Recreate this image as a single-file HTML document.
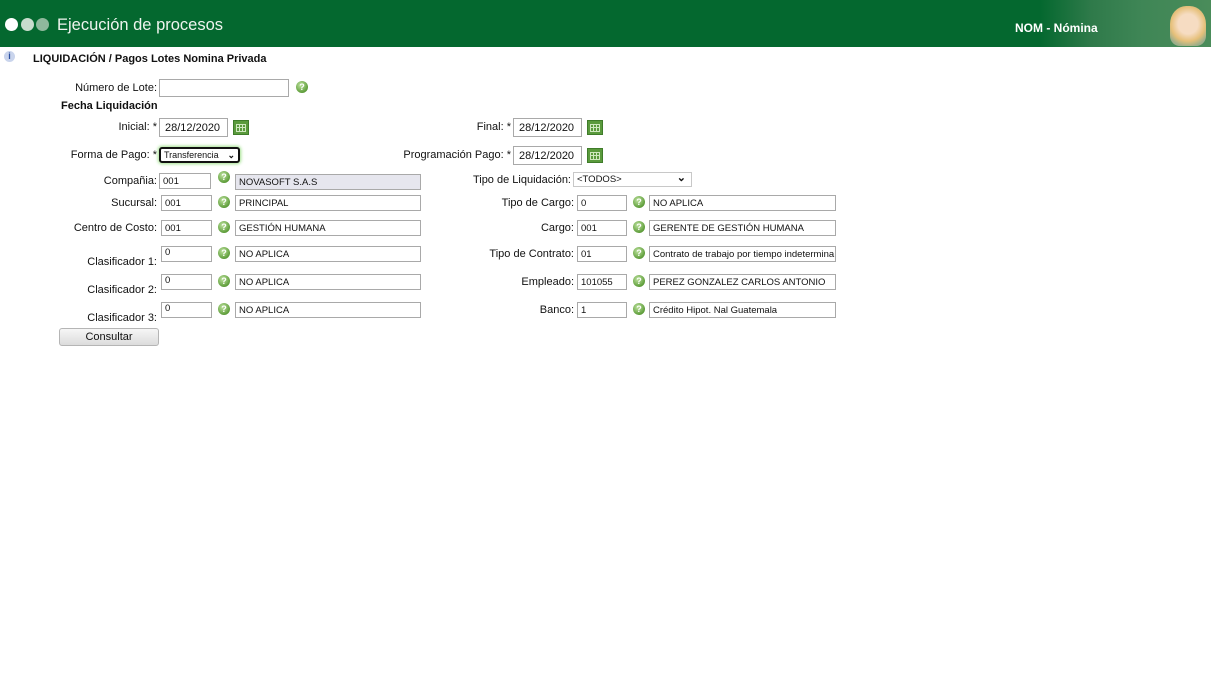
<!DOCTYPE html>
<html><head><meta charset="utf-8"><style>
*{margin:0;padding:0;box-sizing:border-box}
body{width:1211px;height:691px;background:#fff;position:relative;overflow:hidden;font-family:"Liberation Sans",Arial,sans-serif;font-size:11px;color:#111}
.a{position:absolute}
.hd{left:0;top:0;width:1211px;height:47px;background:#04682f}
.c{position:absolute;border-radius:50%;width:13px;height:13px;top:18px}
.l{position:absolute;text-align:right;white-space:nowrap;line-height:14px}
.i{position:absolute;border:1px solid #a9a9a9;background:#fff;height:16px;font-size:9.5px;line-height:15px;padding-left:3px;white-space:nowrap;overflow:hidden;color:#111}
.h{position:absolute;width:12px;height:12px;border-radius:50%;background:radial-gradient(circle at 40% 35%,#bfe3a0,#5e9d3a 70%,#3d7a25);color:#fff;font-size:9px;font-weight:bold;line-height:12px;text-align:center}
.cal{position:absolute;width:16px;height:15px;background:#5a9a3c;border:1px solid #3f7c2a}
.cal:after{content:"";position:absolute;left:2px;top:3px;width:10px;height:8px;background-color:#5a9a3c;box-shadow:inset 0 0 0 1px #cfe8bf;background-image:linear-gradient(90deg,transparent 3px,#cfe8bf 3px,#cfe8bf 4px,transparent 4px,transparent 6px,#cfe8bf 6px,#cfe8bf 7px,transparent 7px),linear-gradient(transparent 3px,#cfe8bf 3px,#cfe8bf 4px,transparent 4px)}
</style></head><body>
<div class="a hd"></div>
<div class="a" style="left:1040px;top:0;width:171px;height:47px;background:linear-gradient(90deg,#04682f,#2f7a4a 30%,#3f8656 60%,#4a8c5a)"></div>
<div class="a" style="left:1170px;top:6px;width:36px;height:40px;border-radius:45% 45% 10px 10px;background:radial-gradient(circle at 50% 45%,#f6dcc2 35%,#e6c07a 60%,#9cae8a 80%)"></div>
<div class="c" style="left:5px;background:#fff"></div>
<div class="c" style="left:21px;background:#c8dccd"></div>
<div class="c" style="left:36px;background:#8fb89c"></div>
<div class="a" style="left:57px;top:15px;font-size:16.5px;color:#eef4ee;line-height:20px">Ejecución de procesos</div>
<div class="a" style="left:1015px;top:21px;font-size:12px;font-weight:bold;color:#fff;line-height:14px">NOM - Nómina</div>
<div class="a" style="left:4px;top:51px;width:11px;height:11px;border-radius:50%;background:#c9d4ec;color:#2a4fa0;font-size:9px;font-weight:bold;text-align:center;line-height:11px">i</div>
<div class="a" style="left:33px;top:52px;font-weight:bold;line-height:14px">LIQUIDACIÓN / Pagos Lotes Nomina Privada</div>

<div class="l" style="right:1054px;top:81px">Número de Lote:</div>
<div class="i" style="left:159px;top:79px;width:130px;height:18px"></div>
<div class="h" style="left:296px;top:81px">?</div>
<div class="a" style="left:61px;top:99px;font-weight:bold;line-height:14px">Fecha Liquidación</div>

<div class="l" style="right:1054px;top:120px">Inicial: *</div>
<div class="i" style="left:159px;top:118px;width:69px;height:19px;font-size:11px;line-height:18px;padding-left:5px">28/12/2020</div>
<div class="cal" style="left:233px;top:120px"></div>
<div class="l" style="right:700px;top:120px">Final: *</div>
<div class="i" style="left:513px;top:118px;width:69px;height:19px;font-size:11px;line-height:18px;padding-left:5px">28/12/2020</div>
<div class="cal" style="left:587px;top:120px"></div>

<div class="l" style="right:1054px;top:148px">Forma de Pago: *</div>
<div class="i" style="left:159px;top:147px;width:81px;height:16px;border:2px solid #111;border-radius:3px;box-shadow:0 0 3px 1px #9fe08a;font-size:9px;line-height:12px;padding-left:3px">Transferencia <span style="position:absolute;right:3px;top:0;font-weight:bold">&#8964;</span></div>
<div class="l" style="right:700px;top:148px">Programación Pago: *</div>
<div class="i" style="left:513px;top:146px;width:69px;height:19px;font-size:11px;line-height:18px;padding-left:5px">28/12/2020</div>
<div class="cal" style="left:587px;top:148px"></div>

<div class="l" style="right:1054px;top:174px">Compañia:</div>
<div class="i" style="left:159px;top:173px;width:52px">001</div>
<div class="h" style="left:218px;top:171px">?</div>
<div class="i" style="left:235px;top:174px;width:186px;background:#e6e6ee">NOVASOFT S.A.S</div>
<div class="l" style="right:640px;top:173px">Tipo de Liquidación:</div>
<div class="i" style="left:573px;top:172px;width:119px;height:15px;line-height:13px;border-color:#c8c8c8">&lt;TODOS&gt;<span style="position:absolute;right:5px;top:-1px;font-weight:bold;font-size:11px">&#8964;</span></div>

<div class="l" style="right:1054px;top:196px">Sucursal:</div>
<div class="i" style="left:161px;top:195px;width:51px">001</div>
<div class="h" style="left:218px;top:196px">?</div>
<div class="i" style="left:235px;top:195px;width:186px">PRINCIPAL</div>
<div class="l" style="right:637px;top:196px">Tipo de Cargo:</div>
<div class="i" style="left:577px;top:195px;width:50px">0</div>
<div class="h" style="left:633px;top:196px">?</div>
<div class="i" style="left:649px;top:195px;width:187px">NO APLICA</div>

<div class="l" style="right:1054px;top:221px">Centro de Costo:</div>
<div class="i" style="left:161px;top:220px;width:51px">001</div>
<div class="h" style="left:218px;top:221px">?</div>
<div class="i" style="left:235px;top:220px;width:186px">GESTIÓN HUMANA</div>
<div class="l" style="right:637px;top:221px">Cargo:</div>
<div class="i" style="left:577px;top:220px;width:50px">001</div>
<div class="h" style="left:633px;top:221px">?</div>
<div class="i" style="left:649px;top:220px;width:187px">GERENTE DE GESTIÓN HUMANA</div>

<div class="l" style="right:1054px;top:255px">Clasificador 1:</div>
<div class="i" style="left:161px;top:246px;width:51px;line-height:12px">0</div>
<div class="h" style="left:218px;top:247px">?</div>
<div class="i" style="left:235px;top:246px;width:186px">NO APLICA</div>
<div class="l" style="right:637px;top:247px">Tipo de Contrato:</div>
<div class="i" style="left:577px;top:246px;width:50px">01</div>
<div class="h" style="left:633px;top:247px">?</div>
<div class="i" style="left:649px;top:246px;width:187px">Contrato de trabajo por tiempo indetermina</div>

<div class="l" style="right:1054px;top:283px">Clasificador 2:</div>
<div class="i" style="left:161px;top:274px;width:51px;line-height:12px">0</div>
<div class="h" style="left:218px;top:275px">?</div>
<div class="i" style="left:235px;top:274px;width:186px">NO APLICA</div>
<div class="l" style="right:637px;top:275px">Empleado:</div>
<div class="i" style="left:577px;top:274px;width:50px">101055</div>
<div class="h" style="left:633px;top:275px">?</div>
<div class="i" style="left:649px;top:274px;width:187px">PEREZ GONZALEZ CARLOS ANTONIO</div>

<div class="l" style="right:1054px;top:311px">Clasificador 3:</div>
<div class="i" style="left:161px;top:302px;width:51px;line-height:12px">0</div>
<div class="h" style="left:218px;top:303px">?</div>
<div class="i" style="left:235px;top:302px;width:186px">NO APLICA</div>
<div class="l" style="right:637px;top:303px">Banco:</div>
<div class="i" style="left:577px;top:302px;width:50px">1</div>
<div class="h" style="left:633px;top:303px">?</div>
<div class="i" style="left:649px;top:302px;width:187px">Crédito Hipot. Nal Guatemala</div>

<div class="a" style="left:59px;top:328px;width:100px;height:18px;border:1px solid #b5b5b5;border-radius:3px;background:linear-gradient(#f6f6f6,#dcdcdc);text-align:center;line-height:16px;font-size:11px">Consultar</div>
</body></html>
